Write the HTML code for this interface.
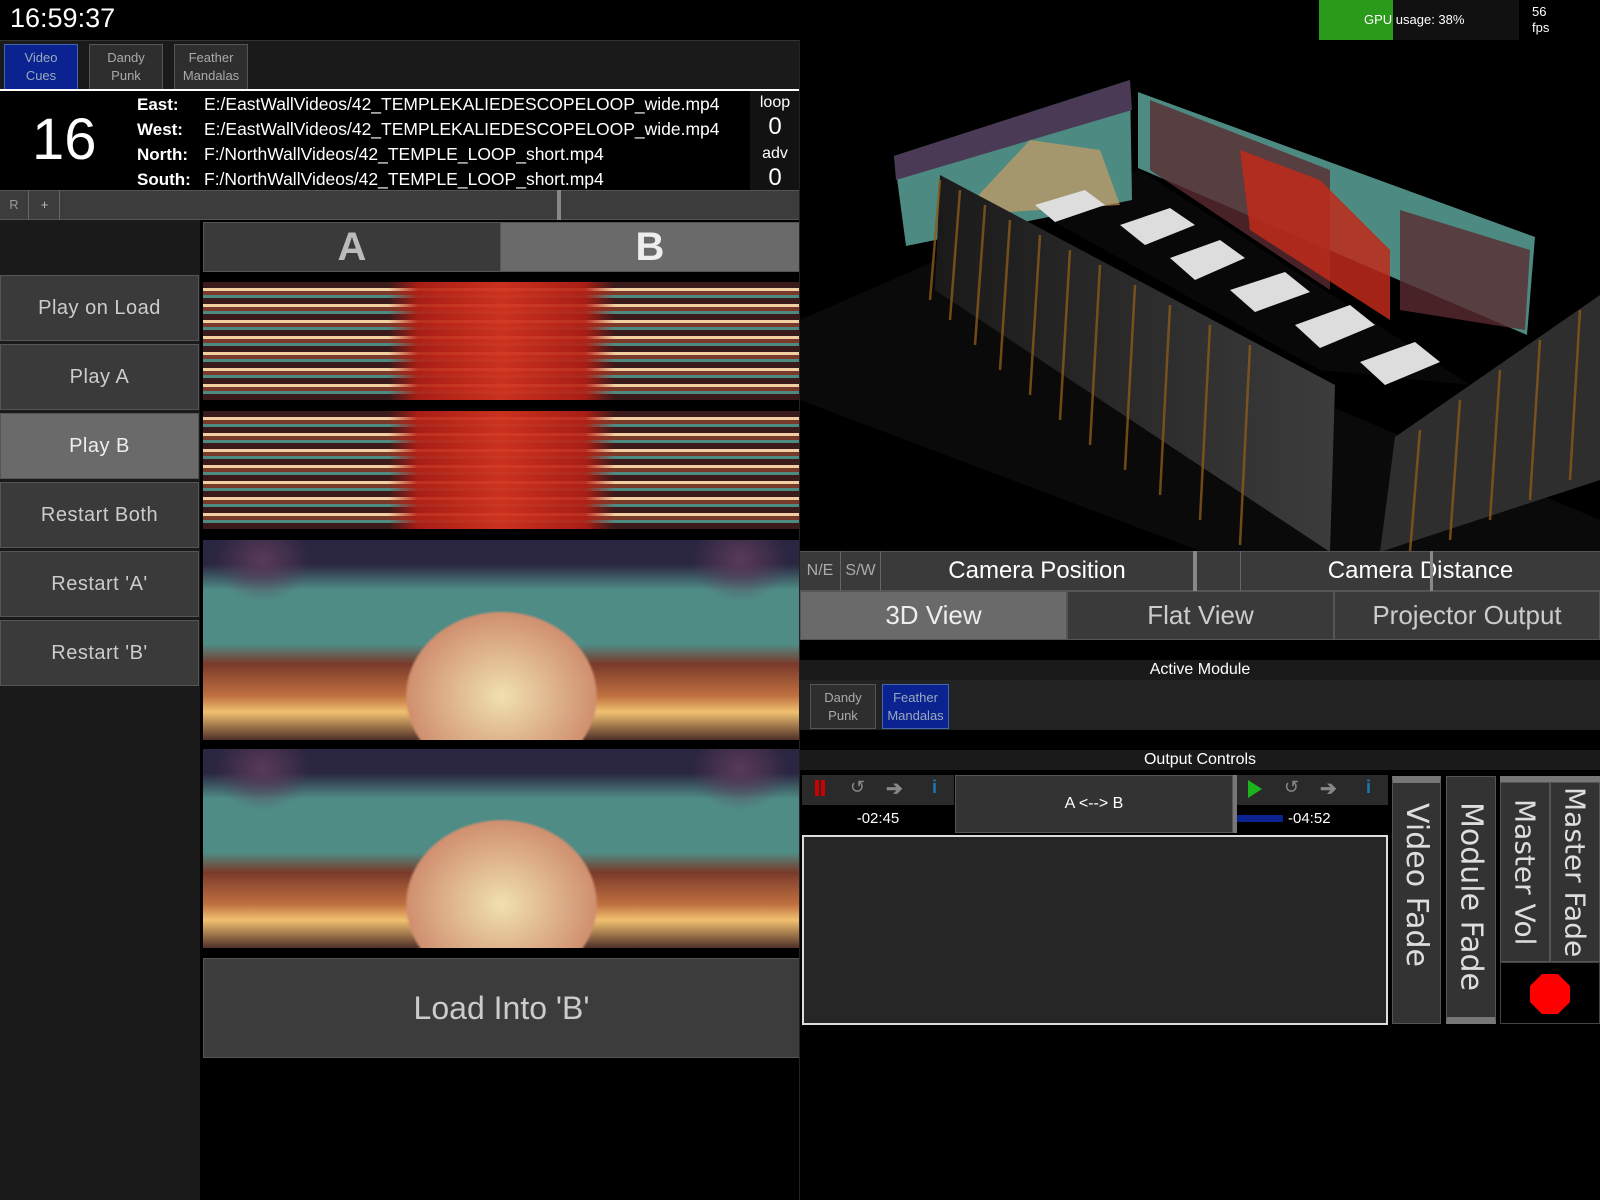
<!DOCTYPE html>
<html><head><meta charset="utf-8">
<style>
*{box-sizing:border-box;margin:0;padding:0}
body{width:1600px;height:1200px;background:#000;overflow:hidden;position:relative;font-family:"Liberation Sans",sans-serif;color:#ddd}
.a{position:absolute}
.btn{position:absolute;background:#3a3a3a;border:1px solid #555;color:#ccc;display:flex;align-items:center;justify-content:center;text-align:center}
.tab{position:absolute;top:44px;height:46px;width:74px;border:1px solid #555;background:#2e2e2e;color:#aaa;font-size:13px;line-height:18px;display:flex;align-items:center;justify-content:center;text-align:center}
.lb{left:0;width:199px;height:66px;font-size:20px;letter-spacing:.5px}
.vt{writing-mode:vertical-rl;white-space:nowrap;font-family:"DejaVu Sans","Liberation Sans",sans-serif;font-size:30px;color:#ddd;display:flex;align-items:center;justify-content:flex-start;padding-top:20px}
.pg{background:
linear-gradient(90deg,transparent 0 31%,rgba(180,30,20,.9) 36%,rgba(210,50,30,.95) 50%,rgba(180,30,20,.9) 64%,transparent 69%),
repeating-linear-gradient(180deg,#3a1a1a 0 6px,#f0d0a0 6px 9px,#7a3a2a 9px 13px,#4d8a82 13px 16px),#4d8a82}
.tm{background:
radial-gradient(ellipse 70px 60px at 10% 10%,#5a3a5a,transparent 70%),
radial-gradient(ellipse 70px 60px at 90% 10%,#5a3a5a,transparent 70%),
radial-gradient(ellipse 170px 150px at 50% 78%,#f0e0b0,#d09070 55%,transparent 57%),
linear-gradient(180deg,#2a2540 0 12%,#4f8c86 25% 52%,#7a3a2a 62%,#c07040 78%,#f0c070 86%,#503028)}
</style></head><body>

<div class="a" style="left:10px;top:3px;font-size:27px;color:#fff">16:59:37</div>
<div class="a" style="left:1319px;top:0;width:74px;height:40px;background:#2a9a1a"></div>
<div class="a" style="left:1393px;top:0;width:126px;height:40px;background:#111"></div>
<div class="a" style="left:1364px;top:12px;font-size:13px;color:#fff">GPU usage: 38%</div>
<div class="a" style="left:1532px;top:4px;font-size:13px;color:#fff;line-height:16px">56<br>fps</div>

<div class="a" style="left:0;top:40px;width:800px;height:50px;background:#1a1a1a;border-top:1px solid #333"></div>
<div class="tab" style="left:4px;background:#0b2390;color:#9ab;border-color:#4466aa">Video<br>Cues</div>
<div class="tab" style="left:89px">Dandy<br>Punk</div>
<div class="tab" style="left:174px">Feather<br>Mandalas</div>
<div class="a" style="left:0;top:89px;width:800px;height:2px;background:#fff"></div>

<div class="a" style="left:32px;top:106px;font-size:58px;color:#fff">16</div>
<div class="a" style="left:137px;top:92px;font-size:17px;line-height:25px;color:#fff;font-weight:bold">East:<br>West:<br>North:<br>South:</div>
<div class="a" style="left:204px;top:92px;font-size:17.5px;line-height:25px;color:#fff">E:/EastWallVideos/42_TEMPLEKALIEDESCOPELOOP_wide.mp4<br>E:/EastWallVideos/42_TEMPLEKALIEDESCOPELOOP_wide.mp4<br>F:/NorthWallVideos/42_TEMPLE_LOOP_short.mp4<br>F:/NorthWallVideos/42_TEMPLE_LOOP_short.mp4</div>
<div class="a" style="left:750px;top:91px;width:50px;height:99px;background:#121212;color:#fff;text-align:center;font-size:16px;line-height:24px">loop<br><span style="font-size:24px">0</span><br>adv<br><span style="font-size:24px">0</span></div>

<div class="a" style="left:0;top:190px;width:800px;height:30px;background:#3c3c3c;border-top:1px solid #555;border-bottom:1px solid #555"></div>
<div class="a" style="left:0;top:190px;width:29px;height:30px;border-right:1px solid #666;color:#999;font-size:13px;text-align:center;line-height:30px">R</div>
<div class="a" style="left:30px;top:190px;width:30px;height:30px;border-right:1px solid #666;color:#bbb;font-size:13px;text-align:center;line-height:30px">+</div>
<div class="a" style="left:557px;top:190px;width:4px;height:30px;background:#888"></div>

<div class="a" style="left:0;top:220px;width:200px;height:980px;background:#1a1a1a"></div>
<div class="btn lb" style="top:275px">Play on Load</div>
<div class="btn lb" style="top:344px">Play A</div>
<div class="btn lb" style="top:413px;background:#6a6a6a;color:#eee">Play B</div>
<div class="btn lb" style="top:482px">Restart Both</div>
<div class="btn lb" style="top:551px">Restart 'A'</div>
<div class="btn lb" style="top:620px">Restart 'B'</div>

<div class="btn" style="left:203px;top:222px;width:298px;height:50px;font-size:40px;font-weight:bold;color:#bbb">A</div>
<div class="btn" style="left:500px;top:222px;width:300px;height:50px;background:#6a6a6a;font-size:40px;font-weight:bold;color:#eee">B</div>

<div class="a pg" style="left:203px;top:282px;width:597px;height:118px"></div>
<div class="a pg" style="left:203px;top:411px;width:597px;height:118px"></div>
<div class="a tm" style="left:203px;top:540px;width:597px;height:200px"></div>
<div class="a tm" style="left:203px;top:749px;width:597px;height:199px"></div>

<div class="btn" style="left:203px;top:958px;width:597px;height:100px;font-size:32px;color:#ccc;background:#3c3c3c">Load Into 'B'</div>
<div class="a" style="left:799px;top:40px;width:1px;height:1160px;background:#222"></div>

<svg class="a" style="left:800px;top:40px" width="800" height="511" viewBox="800 40 800 511">
<rect x="800" y="40" width="800" height="511" fill="#000"/>
<polygon points="800,320 960,250 1600,520 1600,551 1200,551 800,400" fill="#0a0a0a"/>
<polygon points="1015,200 1320,370 1470,385 1140,170" fill="#080808"/>
<polygon points="894,156 1130,80 1132,200 906,246" fill="#4d8a82"/>
<polygon points="894,156 1130,80 1132,110 896,180" fill="#4a3a55"/>
<polygon points="960,215 1030,140 1100,150 1120,205" fill="#e0a060" opacity=".6"/>
<polygon points="1138,92 1535,237 1527,335 1138,168" fill="#4d8a82"/>
<polygon points="1150,100 1330,170 1330,290 1150,170" fill="#5a2a30" opacity=".8"/>
<polygon points="1240,150 1320,180 1390,250 1390,320 1250,230" fill="#c02a1a" opacity=".85"/>
<polygon points="1400,210 1530,250 1525,330 1400,310" fill="#5a2a30" opacity=".8"/>
<defs><linearGradient id="w" x1="0" x2="1"><stop offset="0" stop-color="#1a1a1a"/><stop offset="1" stop-color="#3c3c3c"/></linearGradient></defs>
<polygon points="940,175 1335,385 1330,552 935,290" fill="url(#w)"/>
<polygon points="1395,437 1600,295 1600,480 1380,552" fill="#2e2e2e"/>
<g stroke="#8a5a1a" stroke-width="2.5" opacity=".8">
<line x1="940" y1="180" x2="930" y2="300"/><line x1="960" y1="190" x2="950" y2="320"/><line x1="985" y1="205" x2="975" y2="345"/><line x1="1010" y1="220" x2="1000" y2="370"/><line x1="1040" y1="235" x2="1030" y2="395"/><line x1="1070" y1="250" x2="1060" y2="420"/><line x1="1100" y1="265" x2="1090" y2="445"/><line x1="1135" y1="285" x2="1125" y2="470"/><line x1="1170" y1="305" x2="1160" y2="495"/><line x1="1210" y1="325" x2="1200" y2="520"/><line x1="1250" y1="345" x2="1240" y2="545"/>
<line x1="1420" y1="430" x2="1410" y2="552"/><line x1="1460" y1="400" x2="1450" y2="540"/><line x1="1500" y1="370" x2="1490" y2="520"/><line x1="1540" y1="340" x2="1530" y2="500"/><line x1="1580" y1="310" x2="1570" y2="480"/>
</g>
<g fill="#ddd">
<polygon points="1035,205 1085,190 1105,205 1055,222"/>
<polygon points="1120,225 1170,208 1195,225 1145,245"/>
<polygon points="1170,258 1220,240 1245,258 1195,280"/>
<polygon points="1230,290 1285,272 1310,292 1255,312"/>
<polygon points="1295,325 1350,305 1375,325 1320,348"/>
<polygon points="1360,362 1415,342 1440,362 1385,385"/>
</g>
</svg>

<div class="a" style="left:800px;top:551px;width:800px;height:40px;background:#3a3a3a;border-top:1px solid #555;border-bottom:1px solid #555"></div>
<div class="a" style="left:800px;top:551px;width:41px;height:40px;border-right:1px solid #666;color:#aaa;font-size:16px;line-height:40px;text-align:center">N/E</div>
<div class="a" style="left:841px;top:551px;width:40px;height:40px;border-right:1px solid #666;color:#aaa;font-size:16px;line-height:40px;text-align:center">S/W</div>
<div class="a" style="left:881px;top:551px;width:312px;height:40px;color:#fff;font-size:24px;line-height:40px;text-align:center">Camera Position</div>
<div class="a" style="left:1193px;top:551px;width:4px;height:40px;background:#888"></div>
<div class="a" style="left:1240px;top:551px;width:1px;height:40px;background:#666"></div>
<div class="a" style="left:1241px;top:551px;width:359px;height:40px;color:#fff;font-size:24px;line-height:40px;text-align:center">Camera Distance</div>
<div class="a" style="left:1430px;top:551px;width:3px;height:40px;background:#888"></div>

<div class="btn" style="left:800px;top:591px;width:267px;height:49px;background:#6a6a6a;font-size:26px;color:#eee">3D View</div>
<div class="btn" style="left:1067px;top:591px;width:267px;height:49px;font-size:26px;color:#ccc">Flat View</div>
<div class="btn" style="left:1334px;top:591px;width:266px;height:49px;font-size:26px;color:#ccc">Projector Output</div>

<div class="a" style="left:800px;top:660px;width:800px;height:20px;background:#1a1a1a;color:#fff;font-size:16px;text-align:center;line-height:20px">Active Module</div>
<div class="a" style="left:800px;top:680px;width:800px;height:50px;background:#222"></div>
<div class="tab" style="left:810px;top:684px;width:66px;height:45px">Dandy<br>Punk</div>
<div class="tab" style="left:882px;top:684px;width:67px;height:45px;background:#0b2390;color:#9ab;border-color:#4466aa">Feather<br>Mandalas</div>

<div class="a" style="left:800px;top:750px;width:800px;height:20px;background:#1a1a1a;color:#fff;font-size:16px;text-align:center;line-height:20px">Output Controls</div>
<div class="a" style="left:802px;top:775px;width:152px;height:30px;background:#2a2a2a"></div>
<div class="a" style="left:815px;top:780px;width:4px;height:16px;background:#c00"></div><div class="a" style="left:821px;top:780px;width:4px;height:16px;background:#c00"></div>
<div class="a" style="left:850px;top:777px;color:#888;font-size:18px">↺</div>
<div class="a" style="left:886px;top:776px;color:#888;font-size:20px;font-weight:bold">➔</div>
<div class="a" style="left:932px;top:777px;color:#1a7ab0;font-size:18px;font-weight:bold">i</div>
<div class="a" style="left:802px;top:805px;width:152px;height:28px;background:#000;color:#fff;font-size:15px;text-align:center;line-height:28px">-02:45</div>
<div class="btn" style="left:955px;top:775px;width:278px;height:58px;background:#333;font-size:16px;color:#fff">A &lt;--&gt; B</div>
<div class="a" style="left:1233px;top:775px;width:4px;height:58px;background:#777"></div>
<div class="a" style="left:1237px;top:775px;width:151px;height:30px;background:#2a2a2a"></div>
<svg class="a" style="left:1248px;top:780px" width="16" height="18"><polygon points="0,0 14,9 0,18" fill="#1db31d"/></svg>
<div class="a" style="left:1284px;top:777px;color:#888;font-size:18px">↺</div>
<div class="a" style="left:1320px;top:776px;color:#888;font-size:20px;font-weight:bold">➔</div>
<div class="a" style="left:1366px;top:777px;color:#1a7ab0;font-size:18px;font-weight:bold">i</div>
<div class="a" style="left:1237px;top:805px;width:151px;height:28px;background:#000"></div>
<div class="a" style="left:1237px;top:815px;width:46px;height:7px;background:#0b2390"></div>
<div class="a" style="left:1288px;top:805px;color:#fff;font-size:15px;line-height:28px">-04:52</div>

<div class="a" style="left:802px;top:835px;width:586px;height:190px;background:#262626;border:2px solid #ddd"></div>

<div class="a vt" style="left:1392px;top:776px;width:49px;height:248px;background:#333;border:1px solid #555;border-top:7px solid #777">Video Fade</div>
<div class="a vt" style="left:1446px;top:776px;width:50px;height:248px;background:#333;border:1px solid #555;border-bottom:7px solid #777;padding-top:25px">Module Fade</div>
<div class="a" style="left:1500px;top:776px;width:100px;height:6px;background:#777"></div>
<div class="a vt" style="left:1500px;top:782px;width:50px;height:180px;background:#333;border:1px solid #555;padding-top:16px;font-size:28px">Master Vol</div>
<div class="a vt" style="left:1550px;top:782px;width:50px;height:180px;background:#333;border:1px solid #555;padding-top:4px;font-size:28px">Master Fade</div>
<div class="a" style="left:1500px;top:962px;width:100px;height:62px;background:#000;border:1px solid #444"></div>
<svg class="a" style="left:1530px;top:974px" width="40" height="40"><polygon points="12,0 28,0 40,12 40,28 28,40 12,40 0,28 0,12" fill="#f00"/></svg>
</body></html>
